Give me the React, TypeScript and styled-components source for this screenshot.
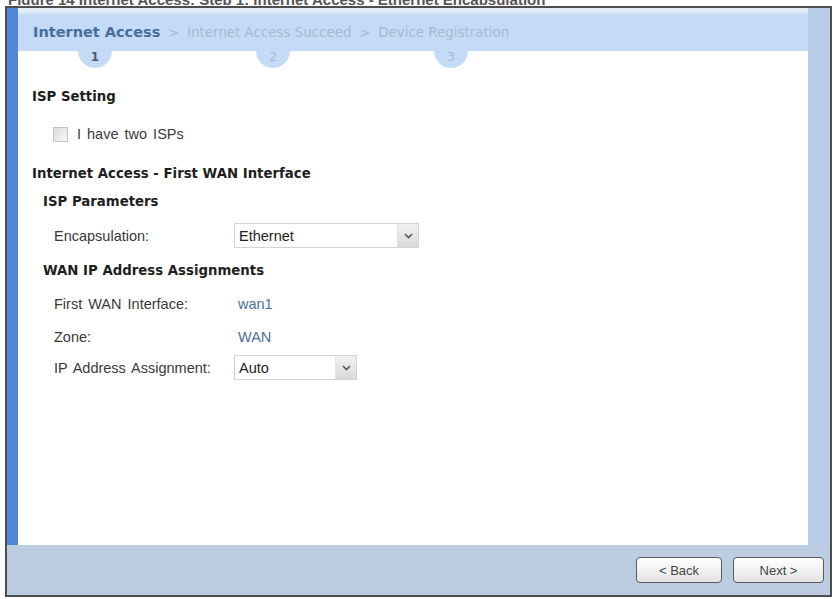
import styled, { createGlobalStyle } from "styled-components";

const GlobalStyle = createGlobalStyle`
    html, body {
        margin: 0;
        padding: 0;
        background: #ffffff;
    }
    body {
        width: 834px;
        height: 599px;
        overflow: hidden;
        font-family: "Liberation Sans", Arial, sans-serif;
        color: #222;
    }
`;

// caption of the figure above the dialog, mostly clipped
const Caption = styled.div`
    height: 5px;
    overflow: hidden;
    display: flex;
    align-items: flex-end;
    padding-left: 8px;
    font-size: 15px;
    font-weight: bold;
    color: #555;
    line-height: 10px;
    white-space: nowrap;
`;

const Frame = styled.div`
    margin: 1px 2px 0 5px;
    height: 591px;
    border: 2px solid #4d4d4d;
    display: flex;
    flex-direction: column;
    box-sizing: border-box;
`;

const Main = styled.div`
    flex: 1;
    display: flex;
    min-height: 0;
`;

const LeftBar = styled.div`
    width: 11px;
    background: #4f86d6;
`;

const RightBar = styled.div`
    width: 22px;
    background: #b7cce7;
`;

const Body = styled.div`
    flex: 1;
    display: flex;
    flex-direction: column;
    background: #fff;
`;

const StepBand = styled.div`
    height: 43px;
    background: linear-gradient(#e3ecf8 0, #e3ecf8 4px, #c4daf6 7px, #c4daf6 100%);
    display: flex;
    align-items: center;
    padding: 5px 0 0 15px;
    box-sizing: border-box;
    white-space: nowrap;
    font-family: "DejaVu Sans", Verdana, sans-serif;
`;

const Step = styled.span<{ $active?: boolean }>`
    font-size: ${({ $active }) => ($active ? "14.5px" : "13.4px")};
    font-weight: ${({ $active }) => ($active ? "bold" : "normal")};
    color: ${({ $active }) => ($active ? "#4a6d98" : "#a7b9cf")};
`;

const Sep = styled.span`
    font-size: 13px;
    color: #a7b9cf;
    margin: 0 8px;
`;

const BubbleRow = styled.div`
    display: flex;
    gap: 144px;
    padding-left: 60px;
`;

const Bubble = styled.div<{ $active?: boolean }>`
    width: 34px;
    height: 17px;
    border-radius: 0 0 17px 17px;
    background: #c4daf6;
    display: flex;
    justify-content: center;
    font-family: "DejaVu Sans", Verdana, sans-serif;
    font-size: 12px;
    line-height: 13px;
    color: ${({ $active }) => ($active ? "#4b5a6e" : "#a9bcd2")};
    font-weight: ${({ $active }) => ($active ? "bold" : "normal")};
`;

const Content = styled.div`
    padding: 20px 0 0 14px;
    display: flex;
    flex-direction: column;
`;

const Heading = styled.div<{ $indent?: number; $top?: number }>`
    font-family: "DejaVu Sans", Verdana, sans-serif;
    font-size: 13.3px;
    font-weight: bold;
    color: #1e1e1e;
    padding-left: ${({ $indent }) => $indent ?? 0}px;
    margin-top: ${({ $top }) => $top ?? 0}px;
    line-height: 18px;
`;

const CheckRow = styled.label`
    display: flex;
    align-items: center;
    gap: 9px;
    margin: 19px 0 0 21px;
    font-size: 14.5px;
    word-spacing: 2px;
    color: #3a3a3a;
    line-height: 18px;
`;

const Box = styled.span`
    width: 13px;
    height: 13px;
    border: 1px solid #c4c4c4;
    background: linear-gradient(135deg, #dcdcdc, #f7f7f7);
`;

const FormRow = styled.div<{ $top: number }>`
    display: grid;
    grid-template-columns: 180px auto;
    align-items: center;
    margin: ${({ $top }) => $top}px 0 0 22px;
    font-size: 14.5px;
    word-spacing: 2px;
    line-height: 18px;
    color: #3a3a3a;
`;

const Value = styled.span`
    color: #4d6f9b;
    padding-left: 4px;
`;

const Select = styled.div<{ $width: number }>`
    width: ${({ $width }) => $width}px;
    height: 25px;
    border: 1px solid #d2d2d2;
    box-sizing: border-box;
    display: flex;
    align-items: center;
    background: #fff;
`;

const SelectText = styled.span`
    flex: 1;
    padding-left: 4px;
    color: #222;
`;

const Arrow = styled.span`
    width: 20px;
    height: 23px;
    background: linear-gradient(#f2f2f2, #d9d9d9);
    border-left: 1px solid #e4e4e4;
    display: flex;
    align-items: center;
    justify-content: center;
`;

const Footer = styled.div`
    height: 50px;
    background: #bccde2;
    display: flex;
    align-items: center;
    justify-content: flex-end;
    gap: 11px;
    padding-right: 6px;
`;

const Button = styled.button<{ $width: number }>`
    width: ${({ $width }) => $width}px;
    height: 26px;
    border: 1px solid #5a5a5a;
    border-radius: 4px;
    background: linear-gradient(#ffffff, #e4e4e4);
    font-family: "Liberation Sans", Arial, sans-serif;
    font-size: 13px;
    color: #444;
    padding: 0;
`;

const Chevron = () => (
    <svg width="9" height="6" viewBox="0 0 9 6">
        <path d="M1 1 L4.5 4.5 L8 1" fill="none" stroke="#555" strokeWidth="1.6" />
    </svg>
);

const App = () => {
    return (
        <>
            <GlobalStyle />
            <Caption>Figure 14  Internet Access: Step 1: Internet Access - Ethernet Encapsulation</Caption>
            <Frame>
                <Main>
                    <LeftBar />
                    <Body>
                        <StepBand>
                            <Step $active>Internet Access</Step>
                            <Sep>&gt;</Sep>
                            <Step>Internet Access Succeed</Step>
                            <Sep>&gt;</Sep>
                            <Step>Device Registration</Step>
                        </StepBand>
                        <BubbleRow>
                            <Bubble $active>1</Bubble>
                            <Bubble>2</Bubble>
                            <Bubble>3</Bubble>
                        </BubbleRow>
                        <Content>
                            <Heading>ISP Setting</Heading>
                            <CheckRow>
                                <Box />
                                I have two ISPs
                            </CheckRow>
                            <Heading $top={22}>Internet Access - First WAN Interface</Heading>
                            <Heading $indent={11} $top={10}>ISP Parameters</Heading>
                            <FormRow $top={12}>
                                <span>Encapsulation:</span>
                                <Select $width={185}>
                                    <SelectText>Ethernet</SelectText>
                                    <Arrow>
                                        <Chevron />
                                    </Arrow>
                                </Select>
                            </FormRow>
                            <Heading $indent={11} $top={14}>WAN IP Address Assignments</Heading>
                            <FormRow $top={15}>
                                <span>First WAN Interface:</span>
                                <Value>wan1</Value>
                            </FormRow>
                            <FormRow $top={15}>
                                <span>Zone:</span>
                                <Value>WAN</Value>
                            </FormRow>
                            <FormRow $top={9}>
                                <span>IP Address Assignment:</span>
                                <Select $width={123}>
                                    <SelectText>Auto</SelectText>
                                    <Arrow>
                                        <Chevron />
                                    </Arrow>
                                </Select>
                            </FormRow>
                        </Content>
                    </Body>
                    <RightBar />
                </Main>
                <Footer>
                    <Button $width={86}>&lt; Back</Button>
                    <Button $width={91}>Next &gt;</Button>
                </Footer>
            </Frame>
        </>
    );
};

export default App;
